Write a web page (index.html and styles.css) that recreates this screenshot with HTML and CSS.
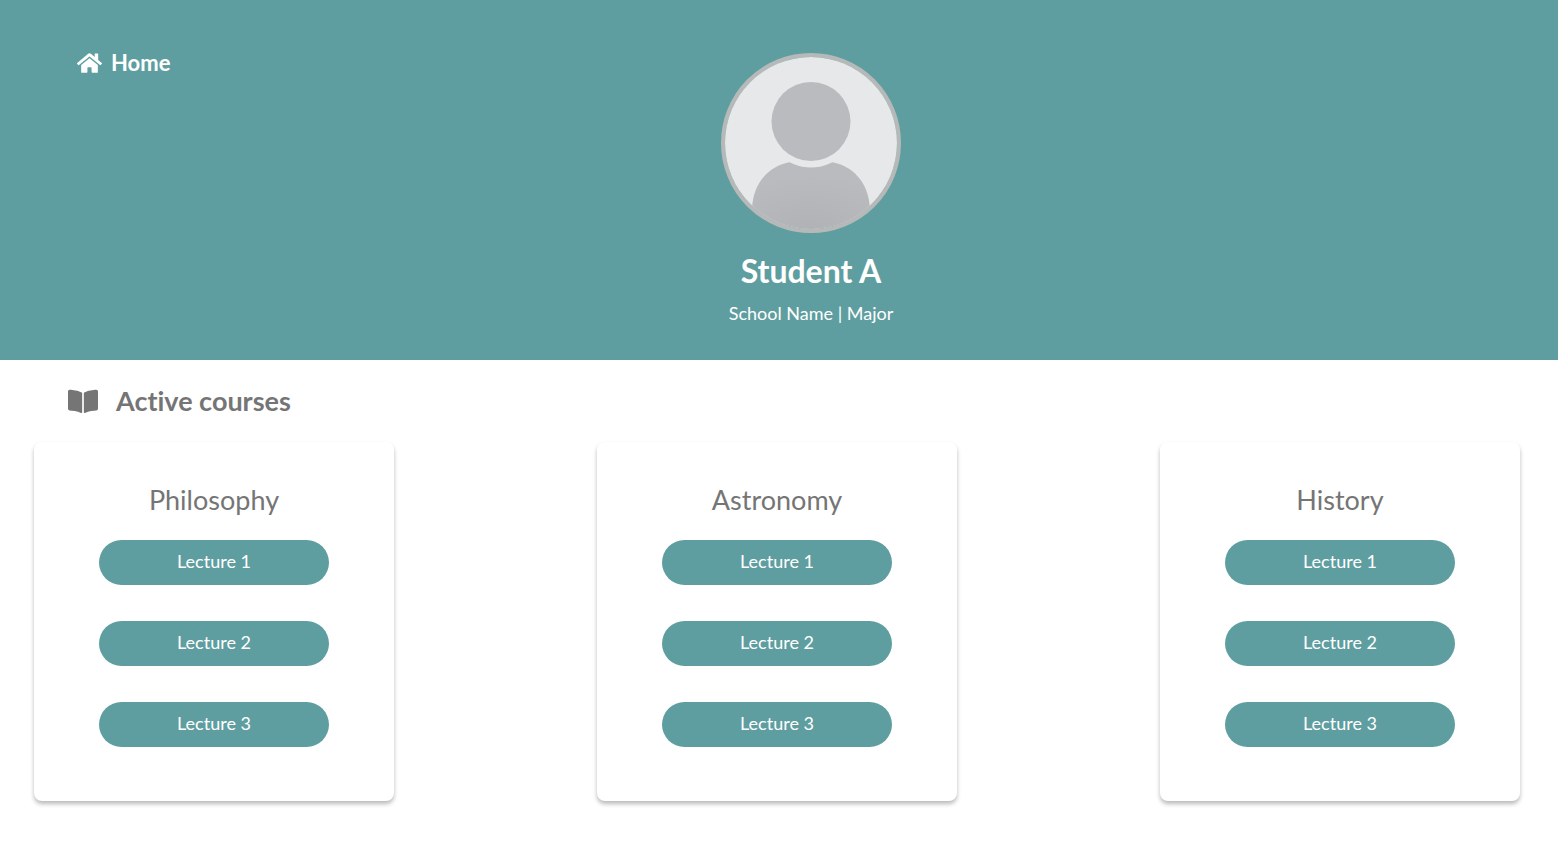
FILE: index.html
```html
<!DOCTYPE html>
<html lang="en">
<head>
  <meta charset="utf-8">
  <meta name="viewport" content="width=device-width, initial-scale=1">
  <title>Student A</title>
  <link rel="stylesheet" href="styles.css">
</head>
<body>
  <header class="banner">
    <nav>
      <a class="home-link" href="#">
        <svg class="home-icon" viewBox="0 0 576 512" aria-hidden="true"><path d="M280.37 148.26L96 300.11V464a16 16 0 0 0 16 16l112.06-.29a16 16 0 0 0 15.92-16V368a16 16 0 0 1 16-16h64a16 16 0 0 1 16 16v95.64a16 16 0 0 0 16 16.05L464 480a16 16 0 0 0 16-16V300L295.67 148.26a12.19 12.19 0 0 0-15.3 0zM571.6 251.47L488 182.56V44.05a12 12 0 0 0-12-12h-56a12 12 0 0 0-12 12v72.61L318.47 43a48 48 0 0 0-61 0L4.34 251.47a12 12 0 0 0-1.6 16.9l25.5 31A12 12 0 0 0 45.15 301l235.22-193.74a12.19 12.19 0 0 1 15.3 0L530.9 301a12 12 0 0 0 16.9-1.6l25.5-31a12 12 0 0 0-1.7-16.93z"/></svg>
        <span>Home</span>
      </a>
    </nav>
    <section class="profile">
      <svg class="avatar" viewBox="0 0 172 172" role="img" aria-label="Profile picture">
        <defs>
          <radialGradient id="shade" cx=".5" cy="1" r=".8">
            <stop offset="0" stop-color="#b1b2b6"/>
            <stop offset="1" stop-color="#babbbf"/>
          </radialGradient>
        </defs>
        <rect width="172" height="172" fill="#e6e8ea"/>
        <path d="M27 172V152C28 124 46 108 66 105Q86 115 106 105C126 108 144 124 145 152V172Z" fill="url(#shade)"/>
        <circle cx="86" cy="64.500" r="46" fill="#e6e8ea"/>
        <circle cx="86" cy="64.500" r="39.500" fill="#babbbf"/>
      </svg>
      <h1 class="name">Student A</h1>
      <p class="school">School Name | Major</p>
    </section>
  </header>
  <main>
    <h2 class="section-title">
      <svg class="book-icon" viewBox="0 0 576 512" aria-hidden="true"><path d="M542.22 32.05c-54.8 3.11-163.72 14.43-230.96 55.59-4.64 2.84-7.27 7.89-7.27 13.17v363.87c0 11.55 12.63 18.85 23.28 13.49 69.18-34.82 169.23-44.32 218.7-46.92 16.89-.89 30.02-14.43 30.02-30.66V62.75c.01-17.71-15.35-31.74-33.77-30.7zM264.73 87.64C197.5 46.48 88.58 35.17 33.78 32.05 15.36 31.01 0 45.04 0 62.75V400.6c0 16.24 13.13 29.78 30.02 30.66 49.49 2.6 149.59 12.11 218.77 46.95 10.62 5.35 23.21-1.94 23.21-13.46V100.63c0-5.29-2.62-10.14-7.27-12.99z"/></svg>
      <span>Active courses</span>
    </h2>
    <div class="courses">
      <article class="card">
        <h3 class="course">Philosophy</h3>
        <button class="lecture" type="button">Lecture 1</button>
        <button class="lecture" type="button">Lecture 2</button>
        <button class="lecture" type="button">Lecture 3</button>
      </article>
      <article class="card">
        <h3 class="course">Astronomy</h3>
        <button class="lecture" type="button">Lecture 1</button>
        <button class="lecture" type="button">Lecture 2</button>
        <button class="lecture" type="button">Lecture 3</button>
      </article>
      <article class="card">
        <h3 class="course">History</h3>
        <button class="lecture" type="button">Lecture 1</button>
        <button class="lecture" type="button">Lecture 2</button>
        <button class="lecture" type="button">Lecture 3</button>
      </article>
    </div>
  </main>
</body>
</html>
```

FILE: styles.css
```css
* {
  box-sizing: border-box;
}

body {
  margin: 0;
  background: #fff;
  color: #757575;
  font-family: Lato, "Open Sans", sans-serif;
  font-variant-ligatures: none;
}

h1, h2, h3, p {
  margin: 0;
}

.banner {
  display: grid;
  grid-template-columns: 1fr auto 1fr;
  padding: 48px 13px 34px 77px;
  background: #5f9ea0;
  color: #fff;
}

.home-link {
  display: inline-flex;
  align-items: center;
  gap: 9px;
  color: inherit;
  font-size: 22px;
  font-weight: 700;
  line-height: 30px;
  text-decoration: none;
}

.home-icon {
  width: 25px;
  fill: currentColor;
}

.profile {
  display: flex;
  flex-direction: column;
  align-items: center;
  padding-top: 5px;
}

.avatar {
  width: 180px;
  height: 180px;
  border: 4px solid #b7b9b8;
  border-radius: 50%;
}

.name {
  margin-top: 18px;
  font-size: 32px;
  font-weight: 700;
  line-height: 40px;
}

.school {
  margin-top: 9px;
  font-size: 18px;
  line-height: 26px;
}

.section-title {
  display: flex;
  align-items: center;
  gap: 18px;
  padding: 24px 68px;
  font-size: 27px;
  font-weight: 700;
  line-height: 34px;
}

.book-icon {
  width: 30px;
  fill: currentColor;
}

.courses {
  display: flex;
  flex-wrap: wrap;
  justify-content: space-between;
  gap: 36px;
  padding: 0 38px 36px 34px;
}

.card {
  display: flex;
  flex-direction: column;
  align-items: center;
  gap: 36px;
  width: 360px;
  padding: 40px 24px 54px;
  border-radius: 8px;
  background: #fff;
  box-shadow: 0 3px 4px rgba(0, 0, 0, 0.27);
}

.course {
  margin-bottom: -14px;
  font-size: 27px;
  font-weight: 400;
  line-height: 36px;
}

.lecture {
  width: 230px;
  height: 45px;
  padding: 0 0 4px;
  border: 0;
  border-radius: 24px;
  background: #5f9ea0;
  color: #fff;
  font: 400 18px/24px Lato, "Open Sans", sans-serif;
  cursor: pointer;
}
```
